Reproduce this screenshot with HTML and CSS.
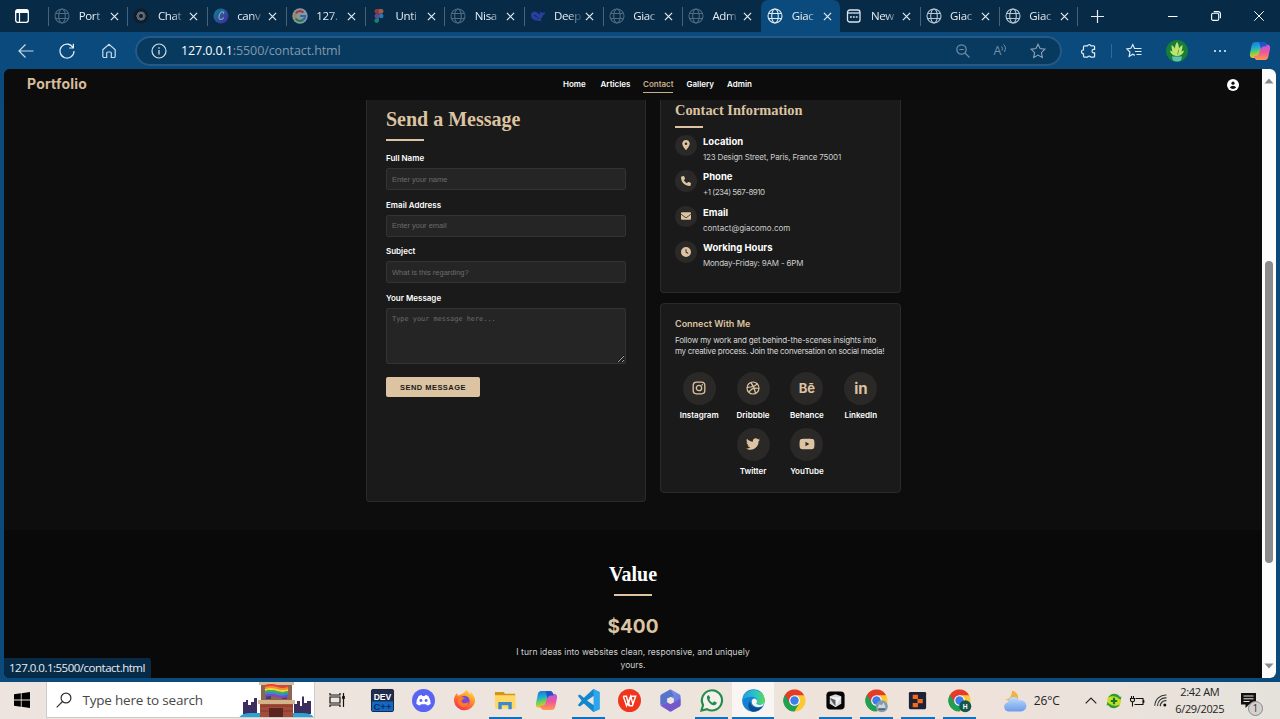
FILE: index.html
```html
<!DOCTYPE html>
<html lang="en">
<head>
<meta charset="utf-8">
<title>Portfolio - Contact</title>
<link rel="stylesheet" href="styles.css">
</head>
<body>
<svg class="defs" aria-hidden="true">
  <defs>
    <linearGradient id="gCop" x1="0" y1="0" x2="0.2" y2="1"><stop offset="0" stop-color="#1b6fe0"/><stop offset=".45" stop-color="#1fb5c9"/><stop offset=".7" stop-color="#7ccf4a"/><stop offset="1" stop-color="#f5c22c"/></linearGradient>
    <linearGradient id="gCop2" x1="0" y1="0" x2="0" y2="1"><stop offset="0" stop-color="#b05be8"/><stop offset=".5" stop-color="#f0559b"/><stop offset="1" stop-color="#ff9a4d"/></linearGradient>
    <linearGradient id="gEdge" x1="0" y1="0" x2="1" y2="0"><stop offset="0" stop-color="#1e9de6"/><stop offset=".6" stop-color="#2cc4c4"/><stop offset="1" stop-color="#5fdc4c"/></linearGradient>
    <linearGradient id="gFox" x1=".8" y1="0" x2=".2" y2="1"><stop offset="0" stop-color="#ffe03c"/><stop offset=".45" stop-color="#ff8a26"/><stop offset="1" stop-color="#f2255d"/></linearGradient>
    <linearGradient id="gM" x1="0" y1="0" x2="1" y2="1"><stop offset="0" stop-color="#a48be8"/><stop offset="1" stop-color="#3f7fdb"/></linearGradient>
    <linearGradient id="gCanva" x1="0" y1="0" x2="1" y2="1"><stop offset="0" stop-color="#0b8396"/><stop offset="1" stop-color="#4a249e"/></linearGradient>
    <linearGradient id="gCloud" x1="0" y1="0" x2="0" y2="1"><stop offset="0" stop-color="#c0dcfb"/><stop offset="1" stop-color="#6c9bea"/></linearGradient>
    <symbol id="globe" viewBox="0 0 16 16"><g fill="none" stroke="currentColor" stroke-width="1.1"><circle cx="8" cy="8" r="7"/><ellipse cx="8" cy="8" rx="3.3" ry="7"/><path d="M1.6 5.5h12.8M1.6 10.5h12.8"/></g></symbol>
    <symbol id="x" viewBox="0 0 10 10"><path d="M1 1l8 8M9 1L1 9" stroke="currentColor" stroke-width="1.3" fill="none"/></symbol>
    <symbol id="copilot" viewBox="0 0 22 20"><path d="M6 1h8c2 0 2.700 1 3.200 2.600l.5 1.700h-2.300c-2 0-2.900.9-3.400 2.700l-1.700 6c-.6 2-1.500 3-3.600 3H4C1.500 17 .4 15.300 1 12.500l1.600-8C3.100 2.200 4 1 6 1z" fill="url(#gCop)"/><path d="M16 19H8.500c-1.700 0-2.500-1-3-2.600L5 15h1.700c2 0 3-1 3.500-2.800l1.600-5.700c.6-2 1.500-3 3.600-3H18c2.500 0 3.600 1.700 3 4.500l-1.600 7.500C18.900 17.800 18 19 16 19z" fill="url(#gCop2)"/><path d="M10 1h4c2 0 2.700 1 3.200 2.600l.5 1.700h-2.300c-2 0-2.900.9-3.400 2.700z" fill="#1c55c8"/></symbol>
    <symbol id="chrome" viewBox="0 0 24 24"><circle cx="12" cy="12" r="11.500" fill="#fcc934"/><path d="M12 12L2 6.250A11.500 11.500 0 0 0 12 23.500l5-8.600z" fill="#1fa055"/><path d="M12 12H12L7 14.900 2 6.250A11.500 11.500 0 0 1 22 6.400H12z" fill="#e33b2e"/><path d="M2 6.250L7 14.900l5 3L9 23.100A11.500 11.500 0 0 1 2 6.250z" fill="#1fa055"/><circle cx="12" cy="12" r="5.600" fill="#fff"/><circle cx="12" cy="12" r="4.400" fill="#3b7de9"/></symbol>
  </defs>
</svg>

<div class="screen">
  <div class="tabstrip">
    <div class="workspace"><svg width="14" height="14" viewBox="0 0 14 14"><rect x=".7" y=".7" width="12.600" height="12.600" rx="2" fill="none" stroke="#fff" stroke-width="1.300"/><path d="M1 1h12v3H1z" fill="#fff"/><path d="M4.500 4v9" stroke="#fff" stroke-width="1.200"/></svg></div>
    <div class="tab"><svg class="fav dim"><use href="#globe"/></svg><span class="name">Port</span><svg class="close"><use href="#x"/></svg></div>
    <div class="tab"><svg class="fav" viewBox="0 0 16 16"><circle cx="8" cy="8" r="7.500" fill="#101c28"/><g fill="none" stroke="#6c7a87" stroke-width=".9"><ellipse cx="8" cy="8" rx="4.300" ry="2.500"/><ellipse cx="8" cy="8" rx="4.300" ry="2.500" transform="rotate(60 8 8)"/><ellipse cx="8" cy="8" rx="4.300" ry="2.500" transform="rotate(120 8 8)"/></g></svg><span class="name">Chat</span><svg class="close"><use href="#x"/></svg></div>
    <div class="tab"><svg class="fav" viewBox="0 0 16 16"><circle cx="8" cy="8" r="7.500" fill="url(#gCanva)"/><path d="M10.500 5.800c.8-2.400-1.600-2.600-3-.8-1.600 2-2.300 5.500-.4 6.300 1.300.5 2.800-.5 3.600-1.900" fill="none" stroke="#8cabc0" stroke-width="1.100"/></svg><span class="name">canv</span><svg class="close"><use href="#x"/></svg></div>
    <div class="tab"><svg class="fav" viewBox="0 0 16 16"><circle cx="8" cy="8" r="7.700" fill="#8797a4"/><g fill="none" stroke-width="2.200"><path d="M11.500 4.500A5 5 0 0 0 3.700 5.500" stroke="#a33b40"/><path d="M3.700 5.500a5 5 0 0 0 0 5" stroke="#a98a2e"/><path d="M3.700 10.500a5 5 0 0 0 7.600 1.200" stroke="#287a4d"/><path d="M11.300 11.700A4.500 4.500 0 0 0 13 8H8" stroke="#3566a8"/></g></svg><span class="name">127.</span><svg class="close"><use href="#x"/></svg></div>
    <div class="tab"><svg class="fav" viewBox="0 0 16 16"><path d="M8 1H5.800a2.300 2.300 0 0 0 0 4.700H8z" fill="#8f3c37"/><path d="M8 1h2.200a2.300 2.300 0 0 1 0 4.700H8z" fill="#a65750"/><path d="M8 5.700H5.800a2.300 2.300 0 0 0 0 4.600H8z" fill="#6b419f"/><circle cx="10.200" cy="8" r="2.300" fill="#247fa7"/><path d="M8 10.300H5.800A2.300 2.300 0 1 0 8 12.600z" fill="#168663"/></svg><span class="name">Unti</span><svg class="close"><use href="#x"/></svg></div>
    <div class="tab"><svg class="fav dim"><use href="#globe"/></svg><span class="name">Nisa</span><svg class="close"><use href="#x"/></svg></div>
    <div class="tab"><svg class="fav" viewBox="0 0 16 16"><path d="M1 7c0-3 3-4.500 5.500-3 1.200.8 2.500 2 3.800 2.200-.6-1.400-.3-2.200.3-2.900.5 1.200 1.400 1.500 2.500 1.400.8-.1 1.500-.5 2.200-.7-.2 2-1.100 3-2.600 3.500-.3 1.800-1.200 3-2.200 4l1.200 1.200c-1.600.5-2.800.2-3.900-.3C4.300 13 1 10.600 1 7z" fill="#293f9f"/><path d="M4 7.500c2 .2 3.500 1.500 4.600 3.400" stroke="#10294a" fill="none"/></svg><span class="name">Deep</span><svg class="close"><use href="#x"/></svg></div>
    <div class="tab"><svg class="fav dim"><use href="#globe"/></svg><span class="name">Giac</span><svg class="close"><use href="#x"/></svg></div>
    <div class="tab"><svg class="fav dim"><use href="#globe"/></svg><span class="name">Adm</span><svg class="close"><use href="#x"/></svg></div>
    <div class="tab active"><svg class="fav"><use href="#globe"/></svg><span class="name">Giac</span><svg class="close"><use href="#x"/></svg></div>
    <div class="tab"><svg class="fav" viewBox="0 0 16 16"><g fill="none" stroke="#dbe4ec" stroke-width="1.300"><rect x="1.500" y="2" width="12.500" height="12" rx="2.300"/><path d="M1.500 5H14"/></g><path d="M4 9h1.800M6.900 9h1.800M9.800 9h1.800" stroke="#dbe4ec" stroke-width="1.600"/></svg><span class="name">New</span><svg class="close"><use href="#x"/></svg></div>
    <div class="tab"><svg class="fav lit"><use href="#globe"/></svg><span class="name">Giac</span><svg class="close"><use href="#x"/></svg></div>
    <div class="tab"><svg class="fav lit"><use href="#globe"/></svg><span class="name">Giac</span><svg class="close"><use href="#x"/></svg></div>
    <svg class="plus" viewBox="0 0 13 13"><path d="M6.500 0v13M0 6.500h13" stroke="#e4ebf1" stroke-width="1.200"/></svg>
    <div class="winctl">
      <svg width="10" height="10" viewBox="0 0 10 10"><path d="M0 5.500h9.500" stroke="#fff"/></svg>
      <svg width="10" height="10" viewBox="0 0 10 10"><g fill="none" stroke="#fff" stroke-width="1.100"><rect x=".6" y="2.300" width="7.100" height="7.100" rx="1.500"/><path d="M2.700.6h4.500a2.200 2.200 0 0 1 2.200 2.200v4.500"/></g></svg>
      <svg width="10" height="10" viewBox="0 0 10 10"><path d="M.3.300l9.400 9.400M9.700.300L.3 9.700" stroke="#fff"/></svg>
    </div>
  </div>

  <div class="toolbar">
    <div class="navbtns">
      <svg width="16" height="16" viewBox="0 0 16 16"><path d="M15.500 8H1.500M7.500 1.500L1 8l6.500 6.500" fill="none" stroke="#c9dcea" stroke-width="1.200"/></svg>
      <svg width="16" height="16" viewBox="0 0 16 16"><path d="M14 4.500A7 7 0 1 0 15 8M14.400.8v4.200h-4.200" fill="none" stroke="#e4edf4" stroke-width="1.200"/></svg>
      <svg width="16" height="16" viewBox="0 0 16 16"><path d="M1.800 6.800L8 1.200l6.200 5.600v6.400a1.300 1.300 0 0 1-1.300 1.300H10.300V10a1 1 0 0 0-1-1H6.700a1 1 0 0 0-1 1v4.500H3.100a1.300 1.300 0 0 1-1.300-1.300z" fill="none" stroke="#c9dcea" stroke-width="1.200"/></svg>
    </div>
    <div class="address">
      <svg width="16" height="16" viewBox="0 0 16 16"><circle cx="8" cy="8" r="7" fill="none" stroke="#d3dfe8" stroke-width="1.200"/><path d="M8 7v4.500M8 4.300v1.400" stroke="#d3dfe8" stroke-width="1.300"/></svg>
      <span class="url"><b>127.0.0.1</b>:5500/contact.html</span>
      <svg width="14" height="14" viewBox="0 0 14 14"><g fill="none" stroke="#6e8ea6" stroke-width="1.200"><circle cx="5.500" cy="5.500" r="4.700"/><path d="M9 9l4.500 4.500M3.300 5.500h4.400"/></g></svg>
      <span class="aloud">A<svg width="6" height="9" viewBox="0 0 6 9"><path d="M.5 2.500q1.600 1.500.5 4M2.500.5q3.500 3 .8 7.500" fill="none" stroke="#6e8ea6"/></svg></span>
      <svg width="16" height="16" viewBox="0 0 16 16"><path d="M8 1.200l2.100 4.300 4.800.7-3.500 3.400.9 4.800L8 12.100l-4.300 2.300.9-4.800L1.100 6.200l4.800-.7z" fill="none" stroke="#8aa4b8" stroke-width="1.100"/></svg>
    </div>
    <div class="tools">
      <svg width="16" height="16" viewBox="0 0 16 16"><path d="M3.500 2.800h3A1.900 1.900 0 0 1 10 2.800h2.600a1 1 0 0 1 1 1v2.600h-1.200a1.800 1.800 0 0 0 0 3.500h1.200v3.300a1 1 0 0 1-1 1H10a1.900 1.900 0 0 0-3.500 0h-3a1 1 0 0 1-1-1v-2.400a2 2 0 0 1 0-4V3.800a1 1 0 0 1 1-1z" fill="none" stroke="#dfeaf2" stroke-width="1.200"/></svg>
      <i class="rule"></i>
      <svg width="16" height="16" viewBox="0 0 16 16"><path d="M9.800 5.500h-1.300L6.800 1.600 4.900 5.300.900 6l3 3-.7 4.300 3.600-2 2 1.100M9.800 5.500h5.700M9 8.500h6.500M10.500 11.500h5" fill="none" stroke="#dfeaf2" stroke-width="1.200"/></svg>
      <svg width="22" height="22" viewBox="0 0 22 22"><circle cx="11" cy="11" r="11" fill="#167d3a"/><path d="M11 2c3 4 2 9 .5 14h-1C9 11 8 6 11 2zM5.500 5c3 1.500 4.700 5 5 11C7 14 5.500 10 5.500 5zM16.500 5c-3 1.500-4.700 5-5 11 3.500-2 5-6 5-11zM3.800 10.500c3.500.5 5.200 2.500 6.500 5.500-3-.2-5.500-2-6.500-5.500zM18.200 10.500c-3.500.5-5.200 2.500-6.500 5.500 3-.2 5.500-2 6.500-5.500z" fill="#bfe36c"/><path d="M5.800 16.500h10.400l-1.200 4q-4 2-8 0z" fill="#5dc2b1"/></svg>
      <svg width="14" height="4" viewBox="0 0 14 4"><g fill="#dfeaf2"><circle cx="2" cy="2" r="1.100"/><circle cx="7" cy="2" r="1.100"/><circle cx="12" cy="2" r="1.100"/></g></svg>
      <svg width="22" height="20"><use href="#copilot"/></svg>
    </div>
  </div>

  <div class="viewport">
    <div class="page">
      <header class="site-head">
        <div class="brand">Portfolio</div>
        <nav><a class="n1">Home</a><a class="n2">Articles</a><a class="n3 on">Contact</a><a class="n4">Gallery</a><a class="n5">Admin</a></nav>
        <svg class="user" viewBox="0 0 12 12"><circle cx="6" cy="6" r="6" fill="#fff"/><circle cx="6" cy="4.200" r="1.600" fill="#0d0d0d"/><path d="M2.800 8.600Q4 6.800 6 6.800t3.200 1.800Q8 10 6 10T2.800 8.600z" fill="#0d0d0d"/></svg>
      </header>
      <main class="contact">
        <form class="card form-card">
          <h2>Send a Message</h2>
          <label>Full Name</label><input placeholder="Enter your name">
          <label>Email Address</label><input placeholder="Enter your email">
          <label>Subject</label><input placeholder="What is this regarding?">
          <label>Your Message</label><textarea placeholder="Type your message here..."></textarea>
          <button type="button">SEND MESSAGE</button>
        </form>
        <div class="side">
          <section class="card info-card">
            <h3>Contact Information</h3>
            <div class="info"><span class="dot"><svg width="8" height="10" viewBox="0 0 384 512"><path d="M215.700 499.200C267 435 384 279.400 384 192C384 86 298 0 192 0S0 86 0 192c0 87.400 117 243 168.300 307.200c12.300 15.300 35.100 15.300 47.400 0zM192 128a64 64 0 1 1 0 128 64 64 0 1 1 0-128z"/></svg></span><div><h4>Location</h4><p class="p1">123 Design Street, Paris, France 75001</p></div></div>
            <div class="info"><span class="dot"><svg width="10" height="10" viewBox="0 0 512 512"><path d="M164.900 24.600c-7.700-18.600-28-28.500-47.400-23.200l-88 24C12.100 30.200 0 46 0 64C0 311.400 200.600 512 448 512c18 0 33.800-12.100 38.600-29.500l24-88c5.300-19.400-4.600-39.700-23.200-47.400l-96-40c-16.300-6.800-35.200-2.100-46.300 11.600L304.700 368C234.300 334.700 177.300 277.700 144 207.300L193.300 167c13.700-11.200 18.400-30 11.600-46.300l-40-96z"/></svg></span><div><h4>Phone</h4><p class="p2">+1 (234) 567-8910</p></div></div>
            <div class="info"><span class="dot"><svg width="10" height="10" viewBox="0 0 512 512"><path d="M48 64C21.500 64 0 85.500 0 112c0 15.100 7.100 29.300 19.200 38.400L236.800 313.600c11.400 8.500 27 8.500 38.400 0L492.800 150.400c12.100-9.100 19.200-23.300 19.200-38.400c0-26.500-21.500-48-48-48H48zM0 176V384c0 35.300 28.700 64 64 64H448c35.300 0 64-28.700 64-64V176L294.400 339.200c-22.800 17.100-54 17.100-76.800 0L0 176z"/></svg></span><div><h4>Email</h4><p class="p3">contact@giacomo.com</p></div></div>
            <div class="info"><span class="dot"><svg width="10" height="10" viewBox="0 0 512 512"><path fill-rule="evenodd" d="M256 0a256 256 0 1 1 0 512A256 256 0 1 1 256 0zM232 120V256c0 8 4 15.500 10.700 20l96 64c11 7.400 25.900 4.400 33.300-6.700s4.400-25.900-6.700-33.300L280 243.200V120c0-13.300-10.700-24-24-24s-24 10.700-24 24z"/></svg></span><div><h4>Working Hours</h4><p class="p4">Monday-Friday: 9AM - 6PM</p></div></div>
          </section>
          <section class="card social-card">
            <h4>Connect With Me</h4>
            <p class="s1">Follow my work and get behind-the-scenes insights into</p>
            <p class="s2">my creative process. Join the conversation on social media!</p>
            <div class="socials">
              <div class="social"><span class="disc"><svg width="14" height="14" viewBox="0 0 14 14"><g fill="none" stroke="#dcc3a1" stroke-width="1.300"><rect x="1.200" y="1.200" width="11.600" height="11.600" rx="3.200"/><circle cx="7" cy="7" r="2.700"/></g><circle cx="10.300" cy="3.700" r=".8"/></svg></span><span>Instagram</span></div>
              <div class="social"><span class="disc"><svg width="14" height="14" viewBox="0 0 14 14"><g fill="none" stroke="#dcc3a1" stroke-width="1.200"><circle cx="7" cy="7" r="6"/><path d="M4.800 1.500Q8.500 6 9.500 12.400M1 6.300Q8.300 6.500 11.300 2.700M2.900 11.300Q6 6 13 7.500"/></g></svg></span><span>Dribbble</span></div>
              <div class="social"><span class="disc glyph be">Bē</span><span>Behance</span></div>
              <div class="social"><span class="disc glyph">in</span><span>LinkedIn</span></div>
              <div class="social"><span class="disc"><svg width="14" height="14" viewBox="0 0 512 512"><path d="M459.370 151.716c.325 4.548.325 9.097.325 13.645 0 138.720-105.583 298.558-298.558 298.558-59.452 0-114.680-17.219-161.137-47.106 8.447.974 16.568 1.299 25.340 1.299 49.055 0 94.213-16.568 130.274-44.832-46.132-.975-84.792-31.188-98.112-72.772 6.498.974 12.995 1.624 19.818 1.624 9.421 0 18.843-1.300 27.614-3.573-48.081-9.747-84.143-51.980-84.143-102.985v-1.299c13.969 7.797 30.214 12.670 47.431 13.319-28.264-18.843-46.781-51.005-46.781-87.391 0-19.492 5.197-37.360 14.294-52.954 51.655 63.675 129.300 105.258 216.365 109.807-1.624-7.797-2.599-15.918-2.599-24.040 0-57.828 46.782-104.934 104.934-104.934 30.213 0 57.502 12.670 76.670 33.137 23.715-4.548 46.456-13.320 66.599-25.340-7.798 24.366-24.366 44.833-46.132 57.827 21.117-2.273 41.584-8.122 60.426-16.243-14.292 20.791-32.161 39.308-52.628 54.253z"/></svg></span><span>Twitter</span></div>
              <div class="social"><span class="disc"><svg width="16" height="14" viewBox="0 0 576 512"><path d="M549.655 124.083c-6.281-23.650-24.787-42.276-48.284-48.597C458.781 64 288 64 288 64S117.220 64 74.629 75.486c-23.497 6.322-42.003 24.947-48.284 48.597-11.412 42.867-11.412 132.305-11.412 132.305s0 89.438 11.412 132.305c6.281 23.650 24.787 41.500 48.284 47.821C117.220 448 288 448 288 448s170.780 0 213.371-11.486c23.497-6.321 42.003-24.171 48.284-47.821 11.412-42.867 11.412-132.305 11.412-132.305s0-89.438-11.412-132.305zm-317.510 213.508V175.185l142.739 81.205-142.739 81.201z"/></svg></span><span>YouTube</span></div>
            </div>
          </section>
        </div>
      </main>
      <section class="value">
        <h2>Value</h2>
        <strong>$400</strong>
        <p class="v1">I turn ideas into websites clean, responsive, and uniquely</p>
        <p>yours.</p>
      </section>
      <div class="status">127.0.0.1:5500/contact.html</div>
    </div>
    <div class="scrollbar">
      <svg width="10" height="6" viewBox="0 0 10 6"><path d="M5 0.500L9.500 5.500H.5z" fill="#8b8b8b"/></svg>
      <div class="track"><div class="thumb"></div></div>
      <svg width="10" height="6" viewBox="0 0 10 6"><path d="M5 5.500L9.500.5H.5z" fill="#8b8b8b"/></svg>
    </div>
  </div>

  <div class="taskbar">
    <div class="start"><svg width="16" height="16" viewBox="0 0 16 16"><path d="M0 2.300l6.800-1v6.300H0zM7.600 1.200L16 0v7.600H7.600zM0 8.400h6.800v6.300l-6.800-1zM7.600 8.400H16V16l-8.400-1.200z"/></svg></div>
    <div class="search">
      <svg width="16" height="16" viewBox="0 0 16 16"><g fill="none" stroke="#333" stroke-width="1.200"><circle cx="10" cy="6" r="4.900"/><path d="M6.500 9.500L.7 15.300"/></g></svg>
      <span>Type here to search</span>
      <svg class="scene" viewBox="0 0 75 36"><path d="M4 32V20h3v-2h2v5h3v-3h3v-4h3v16zM55 32V22h3v-3h3v5h2V15l1-1 1 1v6h3v-2h4v13z" fill="#3c2f5e"/><path d="M0 36q2-5 12-5h51q10 0 12 5z" fill="#27a3d4"/><path d="M21 19h33v17H21z" fill="#a34c3b"/><path d="M21 24h33M21 29h33" stroke="#823629"/><path d="M30 26h14v10H30z" fill="#5c241f"/><path d="M20 0h35v3H20z" fill="#d6bd97"/><path d="M22 3h31v16H22z" fill="#8d6550"/><path d="M19 18h37v4H19z" fill="#d3b48b"/><path d="M27 8h5v9h-5zM43 8h5v9h-5z" fill="#3a4370"/><g fill="none" stroke-width="2.200"><path d="M26 4q6-2 12 0t11 0" stroke="#e93c3c"/><path d="M26 6q6-2 12 0t11 0" stroke="#f78d2a"/><path d="M26 8q6-2 12 0t11 0" stroke="#f5dc3c"/><path d="M26 10q6-2 12 0t11 0" stroke="#3cb554"/><path d="M26 12q6-2 12 0t11 0" stroke="#3787df"/><path d="M26 14q6-2 12 0t11 0" stroke="#8444c5"/></g></svg>
    </div>
    <div class="taskview"><svg width="16" height="16" viewBox="0 0 16 16"><g fill="none" stroke="#111" stroke-width="1.200"><path d="M1 1v2h10V1M1 15v-2h10v2M1 5h10v6H1zM14.500 1v14"/></g><rect x="13.200" y="4" width="2.600" height="3" fill="#111"/></svg></div>
    <div class="apps">
      <div class="app"><svg viewBox="0 0 24 24"><rect x=".5" y=".5" width="23" height="23" rx="1.500" fill="#202b4d" stroke="#162139"/><path d="M1 13h22v10H1z" fill="#1168c5"/><text x="12" y="11.500" class="t-dev">DEV</text><text x="12" y="21.500" class="t-cpp">C++</text></svg></div>
      <div class="app"><svg viewBox="0 0 24 24"><circle cx="12" cy="12" r="12" fill="#5865f2"/><path d="M7 7.200q2-1 3.200-1l.5 1h2.600l.5-1q1.200 0 3.200 1 2.600 4 2.500 8.300-1.800 1.500-3.900 1.800l-.9-1.500H9.300l-.9 1.500q-2.100-.3-3.900-1.800Q4.400 11.200 7 7.200z" fill="#fff"/><circle cx="9.300" cy="12" r="1.500" fill="#5865f2"/><circle cx="14.700" cy="12" r="1.500" fill="#5865f2"/></svg></div>
      <div class="app"><svg viewBox="0 0 24 24"><path d="M14 1c2 1.500 3 3 3.200 4.500C18 5 18.500 4 18.500 3c3 3 5 6.500 4.500 10.500A11.200 11.200 0 0 1 1 12.500C1 9 2 6.500 4.200 4.200L5 7l4-1.500C10 5 12 4 14 1z" fill="url(#gFox)"/><circle cx="12" cy="12.500" r="5.400" fill="#7a49d8"/><path d="M6 9c3-1.500 5-.5 7 1-3 0-3 2-4.500 2.500 1.500 3 5 3 7.500 1 1 3-3 6-6.500 5C5.500 17.500 4 13 6 9z" fill="#ff7a24"/></svg></div>
      <div class="app run"><svg viewBox="0 0 24 24"><path d="M1 3h9l1.500 2H22v4H1z" fill="#d39518"/><path d="M1 6.500h21.500v14H1z" fill="#ffd866"/><path d="M4.500 21v-7.500h14V21h-3.500v-4H8v4z" fill="#3d8acb"/></svg></div>
      <div class="app"><svg viewBox="0 0 22 20"><use href="#copilot"/></svg></div>
      <div class="app run"><svg viewBox="0 0 24 24"><path d="M17 0L7.200 9 3 5.800.8 7l4 5-4 5L3 18.200 7.200 15 17 24l6.500-3V3zM17.500 7v10L10.500 12z" fill="#1387ce" fill-rule="evenodd"/><path d="M17 0l6.500 3v18L17 24l.5-7V7z" fill="#2ba7ef"/></svg></div>
      <div class="app"><svg viewBox="0 0 24 24"><circle cx="12" cy="12" r="12" fill="#f1351d"/><path d="M5.500 7.500h3.300l2 8 2.600-8h5L15 17.500h-3l-1.200-4M5.500 7.500L9 17.500l4.300-10 2.200 8" fill="none" stroke="#fff" stroke-width="1.500"/></svg></div>
      <div class="app"><svg viewBox="0 0 24 24"><path d="M11 .8q1-.6 2 0l8.500 5q1 .6 1 1.800v8.800q0 1.200-1 1.800l-8.500 5q-1 .6-2 0l-8.500-5q-1-.6-1-1.800V7.600q0-1.200 1-1.800zM12 8L8.500 10v4l3.500 2 3.500-2v-4z" fill="url(#gM)" fill-rule="evenodd"/><path d="M12 .5L2.500 5.800q-1 .6-1 1.800v8.800L8 14v-4l7.500-3z" fill="#4770c4" opacity=".8"/><path d="M2 17l6.500-3 3.500 2 10.500-6v6.400q0 1.200-1 1.800l-8.500 5q-1 .6-2 0z" fill="#7d4cc4" opacity=".8"/></svg></div>
      <div class="app run"><svg viewBox="0 0 24 24"><path d="M1.500 22.500l1.700-5.700A10.500 10.500 0 1 1 7.300 21z" fill="#f3f1e9" stroke="#248b4e" stroke-width="2.200"/><path d="M7.200 8.800c0-1.800 1.600-2.600 2.300-2.100l1.200 2.700-1 1.500c.8 1.600 2 2.700 3.600 3.400l1.500-1.400 2.600 1.300c.3 1.600-1.400 2.900-3 2.700-3.500-.4-7.200-4.500-7.200-8.100z" fill="#248b4e"/></svg></div>
      <div class="app run front"><svg viewBox="0 0 24 24"><circle cx="12" cy="12" r="11.800" fill="#1583d4"/><path d="M.3 12A11.800 11.800 0 0 1 23.800 11c.2 3.500-2.300 5.500-5.500 5.500-2.700 0-4-1-3.200-2.300 1.600-2.800-.3-6-4.600-6C6 8.200 2 9.500.3 12z" fill="url(#gEdge)"/><path d="M8.600 12.500c-.5 4 3.500 7.400 8 6.900 2-.2 3.700-1 5-2A11.800 11.800 0 0 1 11 23.700C6 22.500 5.500 15 8.600 12.500z" fill="#0b4d93"/><path d="M11.500 16.800c-2.300-2.500-1.700-6 1-6.800 2.800.3 4 2.500 2.600 4.500-.6.800.4 1.800 2.200 2 3.500.4 4.800-1 6-2.500-.5 2-1.300 3.200-2.300 4.100-3 1.500-7.500 1-9.500-1.300z" fill="#f8f6f3"/></svg></div>
      <div class="app"><svg><use href="#chrome"/></svg></div>
      <div class="app run"><svg viewBox="0 0 24 24"><rect x="2.500" y="2.500" width="19" height="19" rx="4" fill="#050505"/><path d="M12 5.500l6 2v8l-6 3.500-6-3.500v-8z" fill="#d8d8d8"/><path d="M6 8.500h12L12 18.500v-7z" fill="#f4f4f4"/><path d="M6 9.500l6 2v6.500l-3-4z" fill="#1d1d1d" opacity=".65"/></svg></div>
      <div class="app run"><svg viewBox="0 0 24 24"><use href="#chrome"/><circle cx="17.500" cy="18" r="6.300" fill="#829bb0"/><path d="M13 20l2-4 2.500 1 2-3 2 5-2 3z" fill="#ccd6de"/><path d="M14 21h7" stroke="#4e687c" stroke-width="2"/></svg></div>
      <div class="app run"><svg viewBox="0 0 24 24"><rect x="3" y="3" width="18" height="18" rx="1.500" fill="#1d2237"/><path d="M7 6h5.500v4.500H7zM12 10.500h5.500v4.300H12zM7 14.500h5.500V19H7z" fill="#f36a17"/></svg></div>
      <div class="app run"><svg viewBox="0 0 24 24"><use href="#chrome"/><circle cx="18" cy="18" r="6.300" fill="#12564d"/><text x="18" y="20.700" class="t-h">H</text></svg></div>
    </div>
    <div class="tray">
      <svg class="weather" viewBox="0 0 24 22"><path d="M9 .5q7 2 6 9l-4 3-9-3q7 0 7-9z" fill="#f1b340"/><path d="M5.500 21.500a4.700 4.700 0 0 1-.5-9.300 6 6 0 0 1 11.400-1.700 5.600 5.600 0 1 1 1.900 11z" fill="url(#gCloud)"/></svg>
      <span class="temp">26°C</span>
      <svg class="chev" viewBox="0 0 12 7"><path d="M.7 6.300L6 1l5.300 5.300" fill="none" stroke="#222" stroke-width="1.200"/></svg>
      <svg class="shield" viewBox="0 0 16 16"><circle cx="8" cy="8" r="7" fill="#c8df25"/><path d="M2 4.500A7 7 0 0 1 14 4l1.500-.5-1 3.500Q9 1 2 4.500zM14 11.500A7 7 0 0 1 2 12l-1.500.500 1-3.500Q7 15 14 11.500z" fill="#2c9e35"/><path d="M8 4.800v6.400M4.800 8h6.400" stroke="#16782c" stroke-width="2.200"/></svg>
      <svg class="batt" viewBox="0 0 16 12"><g fill="none" stroke="#111" stroke-width="1.100"><path d="M6.500 3.500h7.500v6H5.500M14.800 5v3M1.500 3.500h4v1.800q-.4 1.500-2 1.500t-2-1.500zM2.500 3.500V1M4.500 3.500V1M3.500 7v4.500"/></g></svg>
      <svg class="wifi" viewBox="0 0 13 13"><g fill="none" stroke="#333" stroke-width="1.100"><path d="M.8 11.800A11 11 0 0 1 12.500 1M3.500 12A8 8 0 0 1 12.500 3.900M6.300 12.200a5.400 5.400 0 0 1 6.200-5.500"/></g><circle cx="10.800" cy="11" r="1.500" fill="#111"/></svg>
      <div class="clock"><span>2:42 AM</span><span>6/29/2025</span></div>
      <div class="note"><svg width="15" height="15" viewBox="0 0 15 15"><path d="M0 0h15v11.500H8L4.500 15v-3.500H0z" fill="#111"/><path d="M2.500 3h10M2.500 5.800h10M2.500 8.500h6" stroke="#e8e3db"/></svg><b>1</b></div>
    </div>
  </div>
</div>
</body>
</html>
```
FILE: styles.css
```css
* { box-sizing: border-box; }
body { margin: 0; overflow: hidden; background: #0b4a7c; font-family: "Open Sans", "Noto Sans", sans-serif; }
h2, h3, h4, p { margin: 0; font-weight: normal; }
svg { display: block; flex: none; overflow: visible; }
.defs { width: 0; height: 0; position: absolute; }
.screen { width: 1280px; height: 719px; display: flex; flex-direction: column; overflow: hidden; }

/* browser tabs */
.tabstrip { height: 32px; flex: none; display: flex; align-items: center; background: #072a47; color: #e6edf3; }
.workspace { width: 48.200px; flex: none; padding-left: 15px; }
.tab { width: 79.230px; height: 32px; padding-left: 6px; display: flex; align-items: center; position: relative; flex: none; }
.tab::before { content: ""; position: absolute; left: 0; top: 7px; width: 1px; height: 19px; background: #47637a; }
.tab.active::before, .tab.active + .tab::before { display: none; }
.tab:nth-child(14)::after { content: ""; position: absolute; right: 0; top: 7px; width: 1px; height: 19px; background: #47637a; }
.fav { width: 16px; height: 16px; color: #dfe9f1; }
.fav.dim { color: #4d6a80; }
.fav.lit { color: #b8c6d2; }
.name { width: 27px; margin-left: 8.500px; white-space: nowrap; font-size: 11.500px; letter-spacing: -.35px; line-height: 16px; -webkit-mask-image: linear-gradient(90deg, #000 55%, rgba(0,0,0,.25) 90%); mask-image: linear-gradient(90deg, #000 55%, rgba(0,0,0,.25) 90%); }
.close { width: 9px; height: 9px; margin-left: 4px; }
.tab.active { background: #0b4a7c; border-radius: 7px 7px 0 0; }
.plus { width: 13px; height: 13px; margin-left: 13px; }
.winctl { margin-left: auto; display: flex; gap: 33px; padding-right: 16.500px; }

/* browser toolbar */
.toolbar { height: 37px; flex: none; display: flex; align-items: center; background: #0b4a7c; }
.navbtns { width: 135px; display: flex; gap: 25.300px; padding-left: 18px; }
.address { width: 927px; height: 30px; border: 2px solid #245a85; border-radius: 15px; background: #083a60; display: flex; align-items: center; padding: 0 14px; }
.url { margin: 0 auto 0 14px; font-size: 12.500px; letter-spacing: -.1px; line-height: 17px; color: #8299ac; white-space: nowrap; }
.url b { font-weight: 500; color: #fff; }
.aloud { margin: 0 21.500px 0 24px; width: 15px; font-size: 12.500px; line-height: 16px; color: #6e8ea6; display: flex; }
.aloud svg { margin-top: 1px; }
.tools { display: flex; align-items: center; padding-left: 19px; }
.rule { width: 1px; height: 14px; margin: 0 14px; background: #36698f; }
.tools svg:nth-child(4) { margin-left: 24px; }
.tools svg:nth-child(5) { margin-left: 25px; }
.tools svg:nth-child(6) { margin-left: 21.500px; }

/* page */
.viewport { height: 609px; flex: none; margin: 0 4px; display: flex; border-radius: 6px; overflow: hidden; background: #0d0d0d; }
.page { width: 1258px; position: relative; display: flex; flex-direction: column; font-family: Inter, sans-serif; color: #fff; }
.site-head { height: 31px; flex: none; display: flex; align-items: center; padding: 0 23px; background: #0c0c0c; }
.brand { width: 536px; flex: none; font-size: 14px; font-weight: 700; letter-spacing: .2px; color: #d4bc9d; line-height: 18px; padding-bottom: 1px; }
nav { display: flex; gap: 13.500px; font-size: 8px; font-weight: 600; line-height: 15px; white-space: nowrap; }
nav .on { color: #c8ad8b; border-bottom: 1px solid #c8ad8b; margin-bottom: -1px; }
.n1 { width: 24px; } .n2 { width: 29px; } .n3 { width: 30px; } .n4 { width: 27px; } .n5 { width: 26px; }
.user { width: 12px; height: 12px; margin-left: auto; }

.contact { height: 430px; flex: none; padding-left: 362px; display: flex; gap: 14px; align-items: flex-start; }
.card { background: #1a1a1a; border: 1px solid #2a2a2a; border-radius: 4px; }
.form-card, .info-card { border-top: 0; border-radius: 0 0 4px 4px; }
.form-card { width: 280px; height: 402px; padding: 8px 19px 0; display: flex; flex-direction: column; }
h2, h3 { font-family: "Liberation Serif", serif; font-weight: 700; color: #dcc3a1; white-space: nowrap; }
h2 { font-size: 20px; line-height: 24px; }
h2::after, h3::after { content: ""; display: block; height: 2px; background: #dcc3a1; }
.form-card h2 { height: 45px; line-height: 23px; }
.form-card h2::after { width: 38px; margin-top: 8px; }
label { font-size: 8px; font-weight: 600; line-height: 11px; height: 15px; white-space: nowrap; }
input, textarea { display: block; width: 240px; flex: none; margin: 0; padding: 0 5px; border: 1px solid #333; border-radius: 2px; background: #252525; outline: 0; font: 7.500px "Liberation Sans", sans-serif; }
input { height: 22px; margin-bottom: 9.700px; }
textarea { height: 56px; padding-top: 6px; font: 6.900px "DejaVu Sans Mono", monospace; }
input::placeholder, textarea::placeholder { color: #6d6d6d; opacity: 1; }
button { width: 94px; height: 20px; margin-top: 13px; padding: 0; border: 0; border-radius: 2px; background: #dcc3a1; color: #1a1a1a; font: 700 7.500px "Liberation Sans", sans-serif; letter-spacing: .45px; }

.side { display: flex; flex-direction: column; gap: 9.500px; }
.side .card { width: 241px; padding: 0 14px; }
.side .info-card { height: 193px; }
h3 { font-size: 14.400px; line-height: 20px; height: 34.500px; }
h3::after { width: 28px; margin-top: 6px; }
.info { height: 35.600px; display: flex; gap: 6.500px; }
.dot { width: 21.500px; height: 21.500px; border-radius: 50%; background: #2b2927; display: grid; place-items: center; flex: none; }
.dot svg, .disc svg { fill: #dcc3a1; }
.info h4 { font-size: 9.500px; font-weight: 700; line-height: 14px; white-space: nowrap; }
.info p { font-size: 8px; line-height: 16px; color: #ccc; white-space: nowrap; }
.info .p1 { letter-spacing: -.19px; }
.info .p2 { letter-spacing: -.5px; }
.info .p4 { letter-spacing: -.2px; }
.side .social-card { height: 190.500px; padding-top: 13px; }
.social-card h4 { font-size: 9px; font-weight: 600; line-height: 14px; margin-bottom: 4px; color: #dcc3a1; }
.social-card p { font-size: 8px; line-height: 11.500px; color: #d6d6d6; white-space: nowrap; }
.social-card .s1 { letter-spacing: -.2px; }
.social-card .s2 { letter-spacing: -.28px; }
.socials { display: flex; flex-wrap: wrap; justify-content: center; margin: 14.500px -5px 0 -6px; }
.social { width: 53.900px; height: 56.300px; display: flex; flex-direction: column; align-items: center; font-size: 8px; font-weight: 600; line-height: 20px; }
.disc { width: 33px; height: 33px; border-radius: 50%; background: #2b2927; display: grid; place-items: center; padding-bottom: 1px; }
.glyph { font-size: 15px; font-weight: 700; color: #dcc3a1; line-height: 13px; }
.be { font-size: 13px; }

.value { flex: 1; background: #090909; display: flex; flex-direction: column; align-items: center; padding-top: 31.500px; }
.value h2 { color: #fff; height: 54px; }
.value h2::after { width: 38px; margin: 8px auto 0; }
.value strong { font-size: 19px; line-height: 22px; color: #dcc3a1; }
.value p { font-size: 8.500px; line-height: 13px; color: #d0d0d0; white-space: nowrap; }
.value .v1 { margin-top: 8.500px; letter-spacing: .07px; }
.status { position: absolute; left: 0; bottom: 0; width: 147px; height: 20px; padding-left: 5px; background: #072a47; border-top-right-radius: 3px; font: 11.500px/20px "Open Sans", sans-serif; letter-spacing: -.5px; color: #e4edf4; white-space: nowrap; }
.scrollbar { width: 14px; background: #fcfcfc; display: flex; flex-direction: column; align-items: center; padding: 9px 0; }
.track { flex: 1; width: 8px; padding-top: 177px; }
.thumb { height: 302px; border-radius: 4px; background: #8b8b8b; }

/* taskbar */
.taskbar { height: 37px; margin-top: 4px; flex: none; display: flex; background: linear-gradient(90deg, #eee4df, #ede4dc 60%, #efe2da 75%, #e5e2dc); color: #333; }
.start { width: 45.500px; flex: none; padding: 10px 0 0 14px; }
.search { width: 269px; flex: none; height: 36px; background: #fff; border: 1px solid #ccc; border-width: 0 1px 1px; display: flex; align-items: center; padding-left: 9.500px; overflow: hidden; }
.search span { margin-left: 10.500px; width: 124px; font-size: 13.500px; letter-spacing: -.2px; line-height: 20px; color: #484848; white-space: nowrap; }
.scene { width: 75px; height: 36px; margin-left: auto; }
.taskview { width: 47px; flex: none; padding: 10px 0 0 14.500px; }
.apps { display: flex; }
.app { width: 41.230px; height: 37px; display: grid; justify-items: center; position: relative; padding-top: 7px; }
.app > svg { width: 23px; height: 23px; }
.run::after { content: ""; position: absolute; left: 4px; right: 4px; bottom: 0; height: 2px; background: #0e72c4; }
.front { background: #f8f5f2; }
.run.front::after { left: 0; right: 0; }
.t-dev, .t-cpp, .t-h { font: 700 9px "Liberation Sans", sans-serif; text-anchor: middle; fill: #fff; }
.t-cpp { fill: #0b2f68; font-size: 10px; }
.t-h { font-size: 7px; }
.tray { flex: 1; display: flex; align-items: center; margin-left: 23px; }
.weather { width: 24px; height: 22px; }
.temp { width: 27px; margin-left: 7px; font-size: 12px; letter-spacing: -.1px; color: #222; white-space: nowrap; }
.chev { width: 12px; height: 7px; margin-left: 24px; }
.shield { width: 16px; height: 16px; margin-left: 9px; }
.batt { width: 16px; height: 12px; margin-left: 7px; }
.wifi { width: 13px; height: 13px; margin-left: 9px; }
.clock { width: 50px; margin-left: 8px; display: flex; flex-direction: column; align-items: center; font-size: 11px; line-height: 16.500px; letter-spacing: -.35px; color: #222; white-space: nowrap; }
.note { position: relative; margin-left: 16px; height: 15px; }
.note b { position: absolute; left: 7px; top: 8px; width: 15px; height: 15px; border: 1px solid #888; border-radius: 50%; background: #d2d1ce; font-size: 10px; font-weight: 400; line-height: 13px; text-align: center; }
```
